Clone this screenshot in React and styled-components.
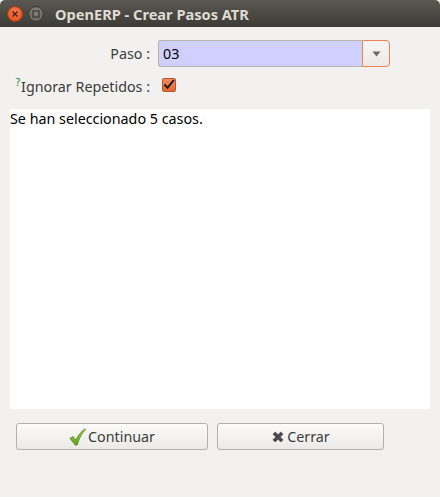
import React from "react";
import styled, { createGlobalStyle } from "styled-components";

const Global = createGlobalStyle`
  html, body { margin: 0; padding: 0; background: #f2f1f0; }
  body { font-family: "Noto Sans", "DejaVu Sans", sans-serif; font-size: 14.3px; color: #3c3c3c; }
  * { box-sizing: border-box; }
`;

const Window = styled.div`
  width: 440px;
  height: 497px;
  display: flex;
  flex-direction: column;
  background: #f2f1f0;
  overflow: hidden;
`;

const TitleBar = styled.div`
  height: 27px;
  flex: none;
  display: flex;
  align-items: center;
  padding-left: 7px;
  gap: 5px;
  background: linear-gradient(#5a5851, #3c3b37);
  border-radius: 5px 5px 0 0;
`;

const WinButton = styled.div`
  width: 16px;
  height: 16px;
  border-radius: 50%;
  display: flex;
  align-items: center;
  justify-content: center;
  background: ${(p) => (p.$close ? "radial-gradient(circle at 50% 35%, #f47a52, #df4a16)" : "radial-gradient(circle at 50% 35%, #86847e, #5f5d58)")};
  border: 1px solid ${(p) => (p.$close ? "#a83a12" : "#3a3935")};
`;

const Title = styled.div`
  margin-left: 6px;
  font-weight: bold;
  font-size: 14.6px;
  color: #dfdbd2;
`;

const Body = styled.div`
  flex: 1;
  display: flex;
  flex-direction: column;
  padding: 13px 10px 0 10px;
`;

const Form = styled.div`
  display: grid;
  grid-template-columns: 140px 232px;
  column-gap: 8px;
  row-gap: 6px;
  align-items: center;
`;

const Label = styled.div`
  text-align: right;
  white-space: nowrap;
  color: #3c3c3c;
  line-height: 18px;
`;

const Help = styled.sup`
  color: #0a7d0a;
  font-size: 10px;
  vertical-align: 6px;
  margin-right: 1px;
`;

const Combo = styled.div`
  display: flex;
  height: 27px;
`;

const Entry = styled.div`
  flex: 1;
  background: #d0d0ff;
  border: 1px solid #b6b4ae;
  border-right: none;
  border-radius: 3px 0 0 3px;
  display: flex;
  align-items: center;
  padding-left: 4px;
  color: #000;
`;

const DropButton = styled.div`
  width: 28px;
  border: 1px solid #f0824e;
  border-radius: 0 4px 4px 0;
  background: linear-gradient(#f7f6f5, #ebeae8);
  display: flex;
  align-items: center;
  justify-content: center;
`;

const CheckRow = styled.div`
  display: flex;
  align-items: center;
  padding-left: 4px;
  height: 18px;
`;

const CheckBox = styled.div`
  width: 14px;
  height: 14px;
  border-radius: 2px;
  background: linear-gradient(#f28a5f, #e4692f);
  border: 1px solid #b8532a;
  display: flex;
  align-items: center;
  justify-content: center;
`;

const TextArea = styled.div`
  margin-top: 13px;
  height: 300px;
  background: #ffffff;
  padding: 0;
  line-height: 20px;
  color: #000;
`;

const ButtonRow = styled.div`
  display: flex;
  gap: 9px;
  padding: 14px 0 0 6px;
`;

const Button = styled.div`
  width: ${(p) => p.$w}px;
  height: 27px;
  border: 1px solid #b2b0ab;
  border-radius: 3px;
  background: linear-gradient(#fbfbfa, #eceae8);
  display: flex;
  align-items: center;
  justify-content: center;
  gap: 2px;
  color: #3c3c3c;
  box-shadow: inset 0 1px 0 #ffffff;
`;

const CheckIcon = () => (
  <svg width="17" height="18" viewBox="0 0 17 18">
    <defs>
      <linearGradient id="gck" x1="0" y1="0" x2="0" y2="1">
        <stop offset="0" stopColor="#a6d65a" />
        <stop offset="1" stopColor="#5f9e1c" />
      </linearGradient>
    </defs>
    <path d="M1 10.5 L4 8.5 L7 12 C9 7.5 12 3.5 16 0.8 L16.5 1.8 C13 5 10.5 9.5 8.2 17 L6.4 17.2 Z" fill="url(#gck)" stroke="#4d8a14" strokeWidth="0.8" strokeLinejoin="round" />
  </svg>
);

const XIcon = () => (
  <svg width="14" height="14" viewBox="0 0 14 14">
    <path d="M2 4.2 L4.2 2 L7 4.8 L9.8 2 L12 4.2 L9.2 7 L12 9.8 L9.8 12 L7 9.2 L4.2 12 L2 9.8 L4.8 7 Z" fill="#4a4a4a" stroke="#3a3a3a" strokeWidth="0.6" strokeLinejoin="round" />
  </svg>
);

export default function App() {
  return (
    <>
      <Global />
      <Window>
        <TitleBar>
          <WinButton $close>
            <svg width="8" height="8" viewBox="0 0 8 8">
              <path d="M1.5 1.5 L6.5 6.5 M6.5 1.5 L1.5 6.5" stroke="#4a1a08" strokeWidth="1.3" />
            </svg>
          </WinButton>
          <WinButton>
            <svg width="8" height="8" viewBox="0 0 8 8">
              <rect x="1" y="1" width="6" height="6" fill="none" stroke="#3a3935" strokeWidth="1.3" />
            </svg>
          </WinButton>
          <Title>OpenERP - Crear Pasos ATR</Title>
        </TitleBar>
        <Body>
          <Form>
            <Label>Paso :</Label>
            <Combo>
              <Entry>03</Entry>
              <DropButton>
                <svg width="9" height="6" viewBox="0 0 9 6">
                  <path d="M0.5 0.5 L8.5 0.5 L4.5 5.5 Z" fill="#6a6a6a" />
                </svg>
              </DropButton>
            </Combo>
            <Label>
              <Help>?</Help>Ignorar Repetidos :
            </Label>
            <CheckRow>
              <CheckBox>
                <svg width="12" height="11" viewBox="0 0 12 11">
                  <path d="M1.5 5.5 L4.5 8.8 L10.8 1.2" fill="none" stroke="#1a1a1a" strokeWidth="2" />
                </svg>
              </CheckBox>
            </CheckRow>
          </Form>
          <TextArea>Se han seleccionado 5 casos.</TextArea>
          <ButtonRow>
            <Button $w={192}>
              <CheckIcon />
              Continuar
            </Button>
            <Button $w={167}>
              <XIcon />
              Cerrar
            </Button>
          </ButtonRow>
        </Body>
      </Window>
    </>
  );
}
